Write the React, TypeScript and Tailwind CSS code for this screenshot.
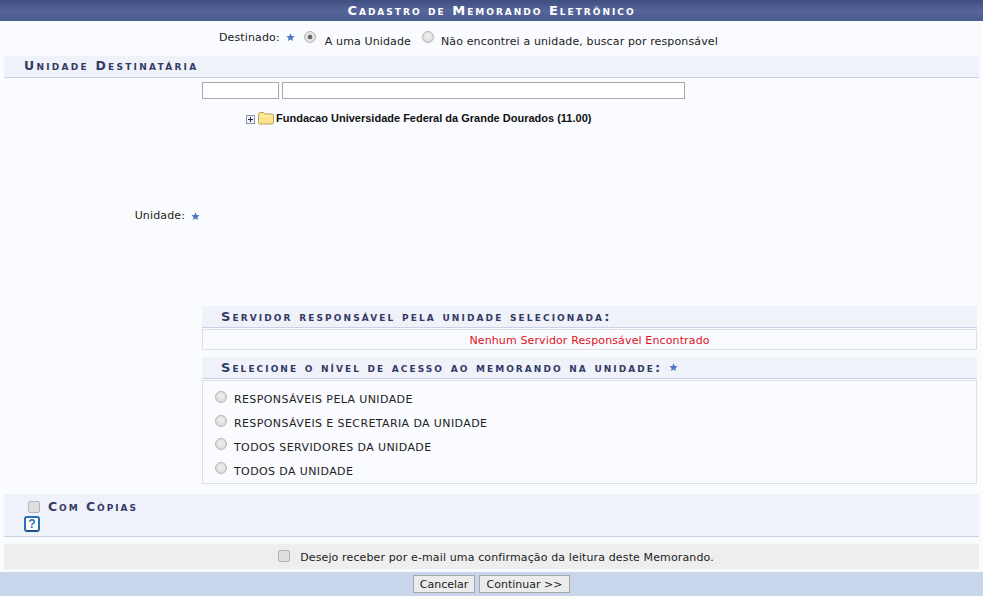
import React from 'react';

const Star = ({ className = '' }: { className?: string }) => (
  <svg viewBox="0 0 10 10" className={`w-[9px] h-[9px] inline-block ${className}`}>
    <path d="M5 .4l1.3 3 3.3.3-2.5 2.1.8 3.2L5 7.3 2.1 9l.8-3.2L.4 3.7l3.3-.3z" fill="#4a78c4" />
  </svg>
);

const Radio = ({ checked = false }: { checked?: boolean }) => (
  <input
    type="radio"
    readOnly
    checked={checked}
    className="appearance-none w-[12px] h-[12px] rounded-full border border-[#b4b4b4] bg-[radial-gradient(circle_at_50%_40%,#f2f2f2,#d2d2d2)] checked:bg-[radial-gradient(circle,#6a6a6a_0,#6a6a6a_28%,#e4e4e4_38%,#e4e4e4_100%)] shrink-0"
  />
);

const Check = () => (
  <input
    type="checkbox"
    readOnly
    className="appearance-none w-[12px] h-[12px] rounded-[2px] border border-[#b5b5b5] bg-[#dedede] shrink-0"
  />
);

const smallCaps = "font-['DejaVu_Sans',sans-serif] font-bold [font-variant:small-caps] text-[#333a66]";

const niveis = [
  'RESPONSÁVEIS PELA UNIDADE',
  'RESPONSÁVEIS E SECRETARIA DA UNIDADE',
  'TODOS SERVIDORES DA UNIDADE',
  'TODOS DA UNIDADE',
];

export default function App() {
  return (
    <div className="w-[983px] h-[598px] bg-white overflow-hidden font-['DejaVu_Sans',sans-serif] text-[11px] tracking-[0.13px] text-[#222]">
      {/* Titulo */}
      <div className="h-[21px] bg-gradient-to-b from-[#3f4d80] via-[#55659a] to-[#4a5a8c] flex items-center justify-center">
        <span className="font-bold [font-variant:small-caps] text-white text-[13px] tracking-[2px] leading-none">
          Cadastro de Memorando Eletrônico
        </span>
      </div>

      <div className="h-[551px] ml-[1px] mr-[1px] bg-[#f9fbfe] flex flex-col">
        {/* Destinado */}
        <div className="h-[35px] flex items-center pl-[218px] pb-[1px]">
          <span>Destinado:</span>
          <Star className="ml-[6px] -mt-[2px]" />
          <span className="ml-[9px] -mt-[2px] flex"><Radio checked /></span>
          <span className="ml-[9px] mt-[9px]">A uma Unidade</span>
          <span className="ml-[11px] -mt-[2px] flex"><Radio /></span>
          <span className="ml-[7px] mt-[9px]">Não encontrei a unidade, buscar por responsável</span>
        </div>

        {/* Unidade destinataria */}
        <div className="h-[22px] mx-[3px] bg-[#eff2f9] border-b border-[#c8d3e6] pl-[20px] flex items-center">
          <span className={`${smallCaps} text-[12.5px] tracking-[2.25px] leading-none`}>Unidade Destinatária</span>
        </div>

        <div className="flex h-[407px]">
          <div className="w-[201px] flex items-start justify-end pr-[2px] pt-[130px] gap-[6px]">
            <span>Unidade:</span>
            <Star className="mt-[4px]" />
          </div>

          <div className="w-[775px]">
            <div className="flex gap-[3px] mt-[4px] h-[18px]">
              <input readOnly className="w-[77px] h-[17px] bg-white border border-[#a9a9a9]" />
              <input readOnly className="w-[403px] h-[17px] bg-white border border-[#a9a9a9]" />
            </div>

            <div className="h-[206px] flex items-start pl-[44px] pt-[10px]">
              <div className="flex items-center h-[16px]">
                <svg viewBox="0 0 9 9" className="w-[9px] h-[9px] mt-[2px] shrink-0">
                  <rect x="0.5" y="0.5" width="8" height="8" fill="#eef1f8" stroke="#8d93a8" />
                  <path d="M2 4.5h5M4.5 2v5" stroke="#1f2a55" />
                </svg>
                <svg viewBox="0 0 16 14" className="w-[16px] h-[14px] ml-[3px] shrink-0">
                  <path d="M.5 3.500q0-2 2-2h3l1.500 1.500h7q1.500 0 1.500 1.500v7q0 1.500-1.500 1.500h-12q-1.500 0-1.500-1.500z" fill="#fbe58c" stroke="#b9a35a" />
                  <path d="M1.500 5h13" stroke="#fff6c8" />
                </svg>
                <span className="ml-[2px] font-['Liberation_Sans',sans-serif] text-[11px] font-bold text-[#111] tracking-normal">
                  Fundacao Universidade Federal da Grande Dourados (11.00)
                </span>
              </div>
            </div>

            <div className="h-[22px] bg-[#eff2f9] border-b border-[#c8d3e6] pl-[19px] flex items-center">
              <span className={`${smallCaps} text-[13px] tracking-[2.1px] leading-none`}>Servidor responsável pela unidade selecionada:</span>
            </div>
            <div className="h-[21px] mt-[1px] pt-[4px] border border-[#dcdfe6] flex items-center justify-center text-[#e0121f]">
              Nenhum Servidor Responsável Encontrado
            </div>

            <div className="h-[22px] mt-[7px] bg-[#eff2f9] border-b border-[#c8d3e6] pl-[19px] flex items-center">
              <span className={`${smallCaps} text-[13px] tracking-[2.05px] leading-none`}>Selecione o nível de acesso ao memorando na unidade:</span>
              <Star className="ml-[7px]" />
            </div>
            <div className="h-[104px] mt-[1px] border border-[#dcdfe6] pl-[12px] pt-[7px] flex flex-col">
              {niveis.map((n) => (
                <div key={n} className="h-[24px] flex items-center gap-[7px] tracking-[0.39px]">
                  <span className="flex -mt-[6px]"><Radio /></span>
                  <span className="mt-[1px] leading-[16px]">{n}</span>
                </div>
              ))}
            </div>
          </div>
        </div>

        {/* Com copias */}
        <div className="h-[43px] mx-[3px] mt-[9px] bg-[#eff2fa] border-b border-[#c8d3e6] pl-[20px] pt-[7px] flex flex-col">
          <div className="flex items-center h-[13px] pl-[4px]">
            <span className="flex -mt-[2px]"><Check /></span>
            <span className={`${smallCaps} ml-[8px] text-[12.5px] tracking-[1.95px] leading-none`}>Com Cópias</span>
          </div>
          <div className="mt-[2px] w-[16px] h-[16px] rounded-[3px] border-2 border-[#2a6fb0] border-b-[#1f4f85] bg-white flex items-center justify-center font-['Liberation_Sans',sans-serif] font-bold text-[12px] leading-none text-[#2a6fb0]">
            ?
          </div>
        </div>

        {/* Confirmacao de leitura */}
        <div className="h-[25px] mx-[3px] mt-[7px] bg-[#eeeeee] flex items-center justify-center gap-[10px] pl-[9px]">
          <span className="flex -mt-[2px]"><Check /></span>
          <span className="mt-[3px]">Desejo receber por e-mail uma confirmação da leitura deste Memorando.</span>
        </div>
      </div>

      {/* Botoes */}
      <div className="h-[24px] bg-[#c8d5eb] flex items-center justify-center gap-[4px]">
        <button className="h-[18px] w-[62px] bg-[#ececec] border border-[#a8a8a8] text-[11px] tracking-normal leading-none text-[#222]">Cancelar</button>
        <button className="h-[18px] w-[91px] bg-[#ececec] border border-[#a8a8a8] text-[11px] tracking-normal leading-none text-[#222]">Continuar &gt;&gt;</button>
      </div>
    </div>
  );
}
